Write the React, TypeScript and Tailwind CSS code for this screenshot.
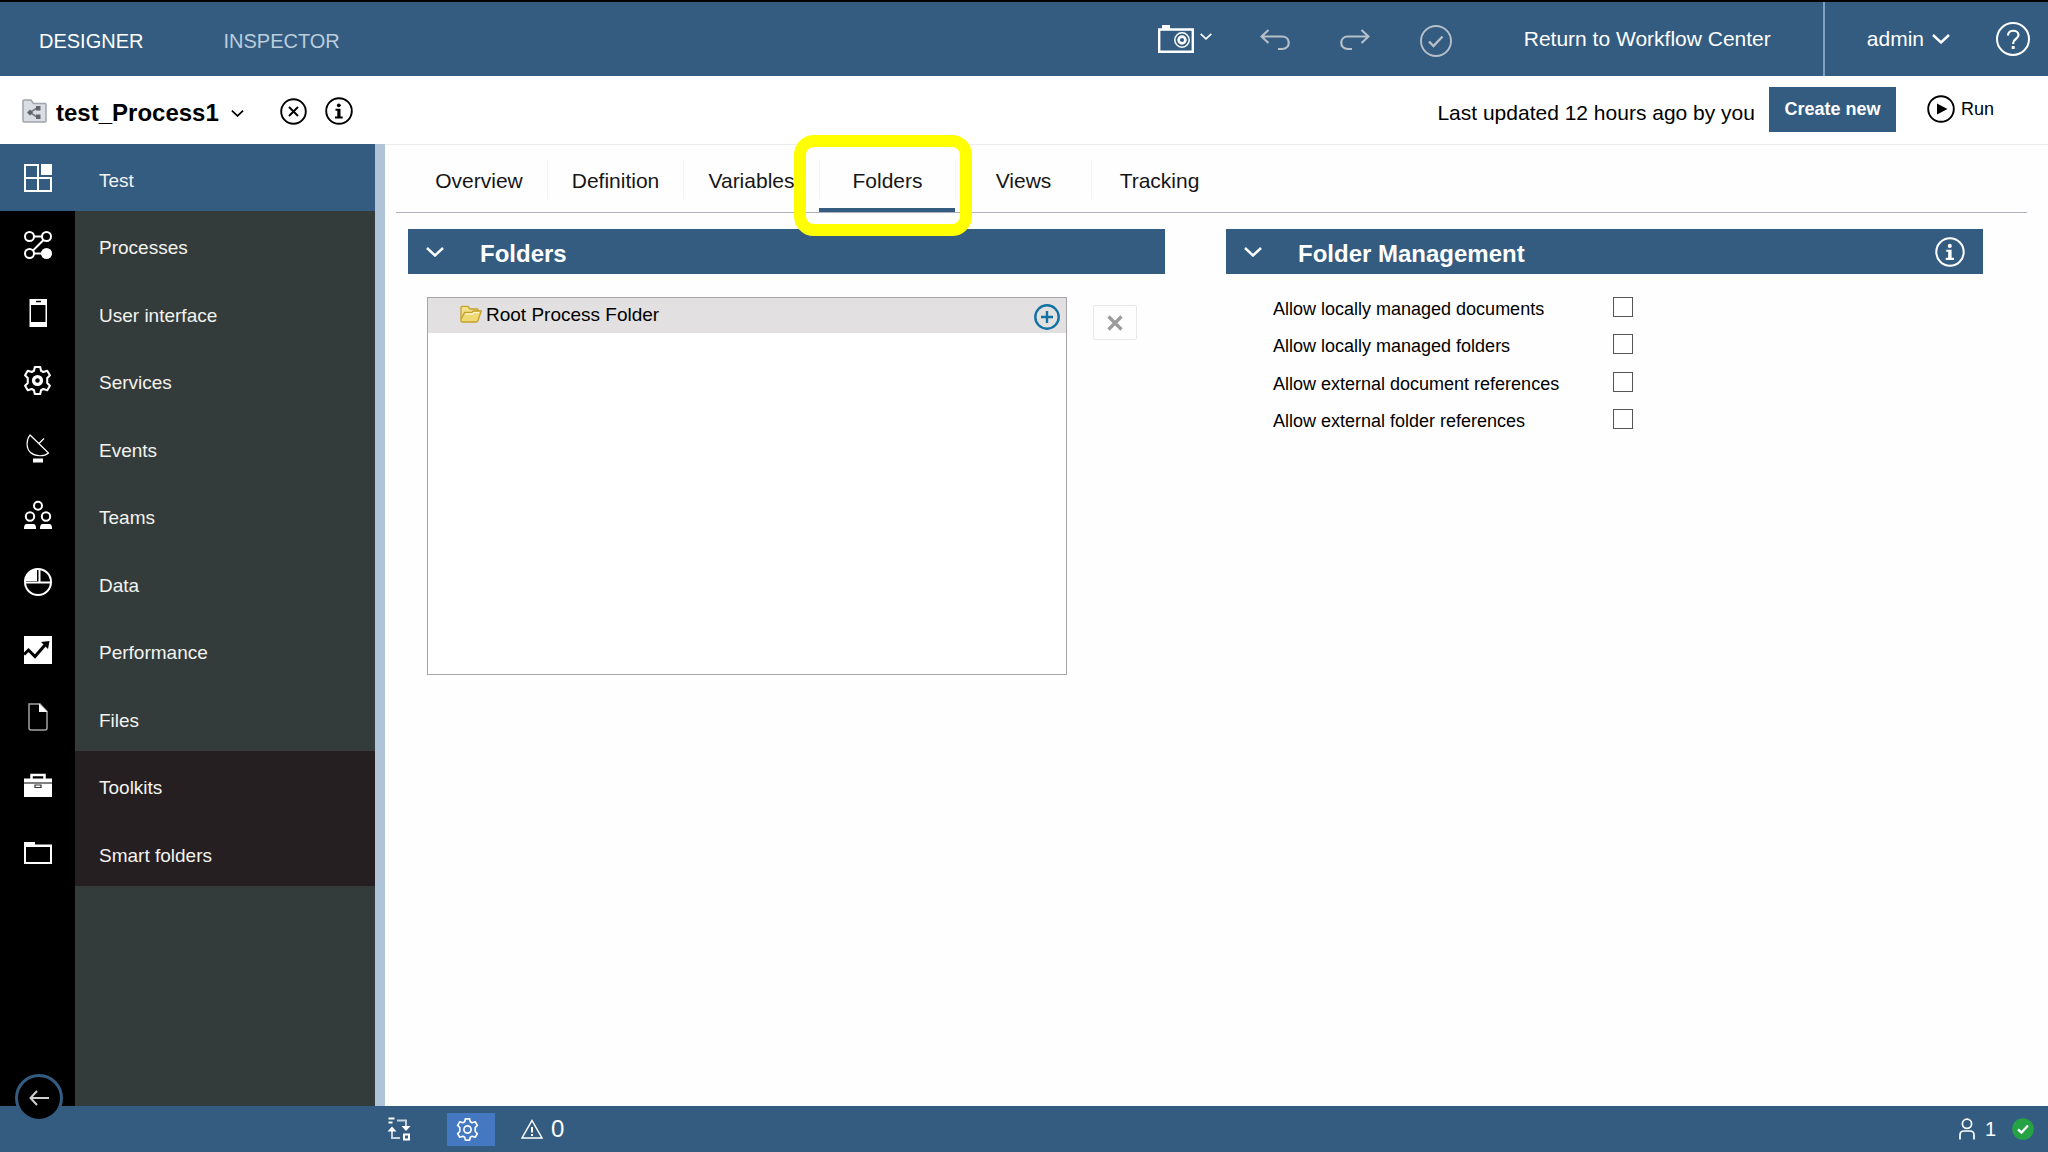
import type { ReactNode } from 'react';

interface IconProps {
  className?: string;
}

function ChevronIcon({ className }: IconProps) {
  return (
    <svg className={className} viewBox="0 0 18 10" fill="none" stroke="currentColor" strokeWidth="2.4">
      <path d="M1 1l8 7.5L17 1" />
    </svg>
  );
}

function InfoIcon({ className }: IconProps) {
  return (
    <svg className={className} viewBox="0 0 28 28" fill="none">
      <circle cx="14" cy="14" r="12.8" stroke="currentColor" strokeWidth="1.9" />
      <circle cx="13.8" cy="8.3" r="1.9" fill="currentColor" />
      <path d="M10.5 11.8h5v7.6h2.2v2H10v-2h2.3v-5.6h-1.8z" fill="currentColor" />
    </svg>
  );
}

function GearIcon({ className, bold = false }: IconProps & { bold?: boolean }) {
  return (
    <svg className={className} viewBox="0 0 28 28" fill="none" stroke="currentColor" strokeWidth="2" strokeLinejoin="round">
      <path d="M11.4 1h5.2l.8 3.6 2.2 1.2 3.8-1.2 2.6 4.4-2.6 2.6v4.8l2.6 2.6-2.6 4.4-3.8-1.2-2.2 1.2-.8 3.6h-5.2l-.8-3.6-2.2-1.2-3.8 1.2L2 19l2.6-2.6v-4.8L2 9l2.6-4.4 3.8 1.2 2.2-1.2z" />
      <circle cx="14" cy="14" r={bold ? 3.8 : 4.4} strokeWidth={bold ? 3.2 : 2} />
    </svg>
  );
}

const menuItems: { label: string; icon: ReactNode; dark?: boolean }[] = [
  {
    label: 'Test',
    icon: (
      <>
        <path d="M1 1h13v13H1zM1 14h13v13H1zM14 14h13v13H14z" strokeWidth="2" />
        <path d="M17 0h11v11H17z" fill="currentColor" stroke="none" />
      </>
    ),
  },
  {
    label: 'Processes',
    icon: (
      <>
        <circle cx="5.5" cy="5.5" r="4.5" strokeWidth="2" />
        <circle cx="22.5" cy="5.5" r="4.5" strokeWidth="2" />
        <circle cx="5.5" cy="22.5" r="4.5" strokeWidth="2" />
        <circle cx="22.5" cy="22.5" r="5.5" fill="currentColor" stroke="none" />
        <path d="M10 5.5h8M19.5 9L9 19.5M10 22.5h8" strokeWidth="2" />
      </>
    ),
  },
  {
    label: 'User interface',
    icon: (
      <>
        <path fillRule="evenodd" d="M5.5 0H23v28H5.5zM7 6v17h14.5V6z" fill="currentColor" stroke="none" />
        <path d="M12 2.5h5" stroke="#000" strokeWidth="1.5" />
      </>
    ),
  },
  { label: 'Services', icon: null },
  {
    label: 'Events',
    icon: (
      <>
        <path d="M6 1C2 6 2 14 6.5 18.5 11 22.5 20 23 24.5 19z" strokeWidth="1.2" />
        <path d="M15 9.5l5-5" strokeWidth="1.2" />
        <path d="M9 24.5h10v4H9z" fill="currentColor" stroke="none" />
      </>
    ),
  },
  {
    label: 'Teams',
    icon: (
      <>
        <circle cx="14" cy="4.7" r="4" strokeWidth="2" />
        <circle cx="6" cy="15.5" r="4.2" strokeWidth="2" />
        <circle cx="22" cy="15.5" r="4.2" strokeWidth="2" />
        <path d="M0 28c0-4 1-5 3-5h6c2 0 3 1 3 5zM16 28c0-4 1-5 3-5h6c2 0 3 1 3 5z" fill="currentColor" stroke="none" />
      </>
    ),
  },
  {
    label: 'Data',
    icon: (
      <>
        <circle cx="14" cy="14" r="13" strokeWidth="2" />
        <path d="M1 14.5h26M15.5 1v13" strokeWidth="2" />
        <path d="M13 .5V13H.5C1 6 6 1 13 .5z" fill="currentColor" stroke="none" />
      </>
    ),
  },
  {
    label: 'Performance',
    icon: (
      <>
        <path d="M0 0h28v28H0z" fill="currentColor" stroke="none" />
        <path d="M0 18.5L4.500 14l6.500 6.500L21 9" stroke="#000" strokeWidth="3" />
        <path d="M17 6l8.500-1L24 13z" fill="#000" stroke="none" />
      </>
    ),
  },
  {
    label: 'Files',
    icon: (
      <>
        <path d="M5 1h11l7 7.500V25c0 1.500-.5 2-2 2H7c-1.500 0-2-.5-2-2z" stroke="#a3a3a3" strokeWidth="1.5" />
        <path d="M15 .5L23.500 9H15z" fill="currentColor" stroke="none" />
      </>
    ),
  },
  {
    label: 'Toolkits',
    dark: true,
    icon: (
      <>
        <path d="M7.500 8V4h13v4" strokeWidth="2.5" />
        <path d="M0 7.500h28v4H0zM0 12.500h28V26H0z" fill="currentColor" stroke="none" />
        <path d="M11 14h6v2.500h-6z" stroke="#333" strokeWidth="1.2" />
      </>
    ),
  },
  {
    label: 'Smart folders',
    dark: true,
    icon: (
      <>
        <path d="M1 7.500h26V25H1z" strokeWidth="2" />
        <path d="M0 4h11v3h17v2H0z" fill="currentColor" stroke="none" />
      </>
    ),
  },
];

const tabs = ['Overview', 'Definition', 'Variables', 'Folders', 'Views', 'Tracking'];

const folderOptions = [
  { id: 'local-documents', label: 'Allow locally managed documents' },
  { id: 'local-folders', label: 'Allow locally managed folders' },
  { id: 'external-documents', label: 'Allow external document references' },
  { id: 'external-folders', label: 'Allow external folder references' },
];

function TopBar() {
  return (
    <header className="flex h-[76px] items-center border-t-2 border-t-black bg-[#335c80] text-[21px] text-white">
      <nav className="flex flex-1 gap-20 pt-1 pl-[39px] text-xl">
        <a href="#designer">DESIGNER</a>
        <a href="#inspector" className="text-[#bccddd]">INSPECTOR</a>
      </nav>
      <div className="flex items-center">
        <button aria-label="Snapshots" className="flex items-center gap-1.5">
          <svg className="h-7 w-9" viewBox="0 0 36 28" fill="none" stroke="currentColor">
            <path d="M1.200 4.500h33.600v22.300H1.200z" strokeWidth="2.4" />
            <path d="M4 0h8v4H4z" fill="currentColor" stroke="none" />
            <circle cx="24" cy="15" r="7.2" strokeWidth="1.5" />
            <circle cx="24" cy="15" r="3.4" strokeWidth="2.6" />
          </svg>
          <ChevronIcon className="mb-1.5 h-[7px] w-3" />
        </button>
        <button aria-label="Undo" className="mt-1 ml-12 text-[#b7bfc8]">
          <svg className="h-6 w-[30px]" viewBox="0 0 30 24" fill="none" stroke="currentColor" strokeWidth="2.2">
            <path d="M8.500 1L1.500 7.500l7 6.500M1.500 7.500H22c9 0 9 12.500 0 12.500h-4" />
          </svg>
        </button>
        <button aria-label="Redo" className="mt-1 ml-[50px] text-[#b7bfc8]">
          <svg className="h-6 w-[30px]" viewBox="0 0 30 24" fill="none" stroke="currentColor" strokeWidth="2.2">
            <path d="M21.500 1l7 6.500-7 6.500M28.500 7.500H8c-9 0-9 12.500 0 12.500h4" />
          </svg>
        </button>
        <button aria-label="Validate" className="mt-1 ml-[50px] text-[#b7bfc8]">
          <svg className="size-8" viewBox="0 0 32 32" fill="none" stroke="currentColor" strokeWidth="1.9">
            <circle cx="16" cy="16" r="15" />
            <path d="M9 16.500l4.500 4.500 9-9.500" strokeWidth="2.4" />
          </svg>
        </button>
      </div>
      <a href="#center" className="ml-[72px]">Return to Workflow Center</a>
      <div className="ml-[52px] flex h-full items-center border-l-2 border-[#7f9fbe] pl-[42px]">
        <button className="flex items-center gap-2">
          admin
          <ChevronIcon className="h-2.5 w-[18px]" />
        </button>
        <button aria-label="Help" className="mr-[18px] ml-[46px]">
          <svg className="size-[34px]" viewBox="0 0 34 34" fill="none" stroke="currentColor" strokeWidth="2">
            <circle cx="17" cy="17" r="16" />
            <path d="M12 13.500c0-6.500 10.500-6 10.500-.5 0 4-5.300 4-5.300 8v1" strokeWidth="2.2" />
            <path d="M15.700 24h3v3h-3z" fill="currentColor" stroke="none" />
          </svg>
        </button>
      </div>
    </header>
  );
}

function ProjectBar() {
  return (
    <div className="flex h-[68px] items-center bg-white pt-0.5 text-[21px] text-black">
      <svg className="ml-[22px] h-6 w-[25px]" viewBox="0 0 25 24" fill="none">
        <path d="M1 5V2c0-.7.3-1 1-1h7l2.500 3.500H23c.7 0 1 .3 1 1V22c0 .7-.3 1-1 1H2c-.7 0-1-.3-1-1z" fill="#dadde3" stroke="#a0a3a9" strokeWidth="1.5" />
        <path d="M8 13.500l7-4.500M8 13.500l7 4.500" stroke="#777b84" strokeWidth="1.5" />
        <path d="M5 13.500l3-3 3 3-3 3zM14 7h4.500v4.500H14zM14 15.500h4.500V20H14z" fill="#60646d" />
      </svg>
      <button className="ml-[9px] flex items-center gap-3 pt-1 text-2xl font-bold">
        test_Process1
        <ChevronIcon className="h-[7px] w-[13px]" />
      </button>
      <button aria-label="Close" className="ml-9">
        <svg className="size-[27px]" viewBox="0 0 27 27" fill="none" stroke="currentColor" strokeWidth="1.9">
          <circle cx="13.5" cy="13.5" r="12.3" />
          <path d="M9 9l9 9M18 9l-9 9" />
        </svg>
      </button>
      <button aria-label="Details" className="ml-[18px]">
        <InfoIcon className="size-7" />
      </button>
      <p className="ml-auto pt-1">Last updated 12 hours ago by you</p>
      <button className="mb-1 ml-[14px] h-[45px] w-[127px] bg-[#335c80] text-lg font-bold text-white">Create new</button>
      <button className="mr-[54px] mb-1 ml-[31px] flex items-center gap-1.5 text-lg">
        <svg className="size-7" viewBox="0 0 28 28" fill="none" stroke="currentColor" strokeWidth="1.9">
          <circle cx="14" cy="14" r="12.8" />
          <path d="M10 8.500L20.500 14 10 19.500z" fill="currentColor" stroke="none" />
        </svg>
        Run
      </button>
    </div>
  );
}

function Sidebar() {
  return (
    <aside className="relative flex w-[385px] shrink-0 flex-col border-r-10 border-[#b0c4d9] bg-[linear-gradient(to_right,#000_75px,#333c3b_75px)]">
      <nav className="grid h-[742px] grid-rows-[repeat(11,1fr)] text-[19px] text-[#f3f3f0]">
        {menuItems.map((item, i) => (
          <a key={item.label} href="#" className={i === 0 ? 'flex bg-[#335c80]' : 'flex'}>
            <span className="flex w-[75px] items-center justify-center text-white">
              {item.icon ? (
                <svg className="size-7 overflow-visible" viewBox="0 0 28 28" fill="none" stroke="currentColor">
                  {item.icon}
                </svg>
              ) : (
                <GearIcon className="size-[29px]" bold />
              )}
            </span>
            <span className={item.dark ? 'flex flex-1 items-center bg-[#251f22] pt-[7px] pl-6' : 'flex flex-1 items-center pt-[7px] pl-6'}>
              {item.label}
            </span>
          </a>
        ))}
      </nav>
      {/* Collapse button hangs over the status bar */}
      <button
        aria-label="Collapse menu"
        className="absolute -bottom-4 left-[15px] flex size-12 items-center justify-center rounded-full border-3 border-[#335c80] bg-black text-[#cfcfcf]"
      >
        <svg className="h-4 w-5" viewBox="0 0 20 16" fill="none" stroke="currentColor" strokeWidth="2">
          <path d="M8 1L1.500 8 8 15M1.500 8H20" />
        </svg>
      </button>
    </aside>
  );
}

function SectionHeader({ title, info = false }: { title: string; info?: boolean }) {
  return (
    <div className="flex h-[45px] items-center bg-[#335c80] px-[18px] text-white">
      <button aria-label={`Collapse ${title}`}>
        <ChevronIcon className="h-2.5 w-[18px]" />
      </button>
      <h2 className="ml-9 pt-1 text-2xl font-bold">{title}</h2>
      {info && (
        <button aria-label="About folder management" className="ml-auto">
          <InfoIcon className="size-[30px]" />
        </button>
      )}
    </div>
  );
}

function FolderTree() {
  return (
    <section>
      <SectionHeader title="Folders" />
      <div className="mt-[23px] flex items-start pr-7 pl-[19px]">
        <div className="h-[378px] flex-1 border border-[#a6a6aa] bg-white">
          <div className="flex h-[35px] items-center bg-[#e2e0e1] pr-1.5 pl-8 text-[19px] text-black">
            <svg className="mr-1 mb-1 h-[18px] w-[22px]" viewBox="0 0 22 18" fill="none" stroke="#c2a02c" strokeWidth="1.3">
              <path d="M1 14V3c0-1 .5-1.700 1.500-1.700H8L10 4h7c.8 0 1.200.5 1.200 1.200V8" fill="#f3e08a" />
              <path d="M1 14.500L4.500 7.500h7.300L13.300 6H21.300L18 15.500c-.4 1-1 1.500-2 1.500H2.500C1.200 17 .7 16 1 14.500z" fill="#f0d873" />
              <path d="M5.500 9h7l1.500-1.400h5" stroke="#fdf6cf" />
            </svg>
            Root Process Folder
            <button aria-label="Add folder" className="ml-auto pt-0.5 text-[#1272a3]">
              <svg className="size-[26px]" viewBox="0 0 26 26" fill="none" stroke="currentColor" strokeWidth="2.4">
                <circle cx="13" cy="13" r="11.7" />
                <path d="M13 7v12M7 13h12" />
              </svg>
            </button>
          </div>
        </div>
        <button
          aria-label="Remove folder"
          className="mt-2 ml-[26px] flex h-[35px] w-11 items-center justify-center rounded-xs border border-[#e8e8ea] text-[#9b9b9b]"
        >
          <svg className="size-4" viewBox="0 0 16 16" fill="none" stroke="currentColor" strokeWidth="3.2">
            <path d="M1.500 1.500l13 13M14.500 1.500l-13 13" />
          </svg>
        </button>
      </div>
    </section>
  );
}

function FolderManagement() {
  return (
    <section>
      <SectionHeader title="Folder Management" info />
      <div className="mt-3.5 grid h-[150px] grid-rows-4 pl-[47px] text-lg text-black">
        {folderOptions.map((option) => (
          <div key={option.id} className="flex items-center">
            <label htmlFor={option.id} className="w-[340px] pt-1">{option.label}</label>
            <input id={option.id} type="checkbox" className="size-5 appearance-none border border-[#555] bg-white" />
          </div>
        ))}
      </div>
    </section>
  );
}

function StatusBar() {
  return (
    <footer className="flex h-[46px] items-center bg-[#335c80] pl-[387px] text-white">
      <button aria-label="Refresh">
        <svg className="size-6" viewBox="0 0 24 24" fill="none" stroke="currentColor" strokeWidth="2">
          <path d="M1.500 1.500h6M1.500 5.500h4" />
          <path d="M10 3.500h9V11M13 21H5v-9" stroke="#c5d3e0" />
          <path d="M14.500 9h9L19 14zM.5 14.500h9L5 9.500z" fill="currentColor" stroke="none" />
          <path d="M17 17.500h5v5h-5z" />
        </svg>
      </button>
      <button aria-label="Settings" className="ml-9 flex h-[33px] w-12 items-center bg-[#4478c0] pl-[9px]">
        <GearIcon className="size-[23px]" />
      </button>
      <button className="ml-[26px] flex items-center gap-2 text-2xl">
        <svg className="h-5 w-[22px]" viewBox="0 0 22 20" fill="none" stroke="currentColor" strokeWidth="1.5">
          <path d="M11 1.500L21 19H1z" />
          <path d="M11 8v5.500M11 15v2" strokeWidth="2" />
        </svg>
        0
      </button>
      <div className="mr-[14px] ml-auto flex items-center text-xl">
        <svg className="mr-2.5 h-[22px] w-4" viewBox="0 0 16 22" fill="none" stroke="currentColor" strokeWidth="1.7">
          <circle cx="8" cy="5.8" r="4.6" />
          <path d="M1 21.500V17c0-2.500 1.500-4 4-4h6c2.500 0 4 1.500 4 4v4.500" />
        </svg>
        1
        <svg className="ml-4 size-[22px]" viewBox="0 0 22 22" fill="none">
          <circle cx="11" cy="11" r="10.8" fill="#25a244" />
          <path d="M6 11.500l3.500 3 6.500-7" stroke="#fff" strokeWidth="2.4" />
        </svg>
      </div>
    </footer>
  );
}

export default function App() {
  return (
    <div className="flex min-h-screen flex-col bg-white font-['Liberation_Sans',Arial,sans-serif]">
      <TopBar />
      <ProjectBar />
      <div className="flex flex-1">
        <Sidebar />
        <main className="min-w-0 flex-1 border-t border-[#ececef] bg-[#fefefe]">
          <nav className="mr-[21px] ml-[11px] flex h-[68px] border-b border-[#b0b0b8] pl-[15px] text-[21px] text-[#161616]">
            {tabs.map((tab, i) => (
              <a key={tab} href="#" className="relative flex w-[136px] items-center">
                <span
                  className={
                    i === 0
                      ? 'flex h-10 flex-1 items-center justify-center pt-1'
                      : 'flex h-10 flex-1 items-center justify-center border-l border-[#f5f3f7] pt-1'
                  }
                >
                  {tab}
                </span>
                {tab === 'Folders' && (
                  <>
                    <span className="absolute bottom-0 left-0 h-1 w-full bg-[#335c80]" />
                    <span className="absolute -top-2.5 -right-[17px] -left-[25px] z-10 h-[101px] rounded-[20px] border-12 border-[#ffff00]" />
                  </>
                )}
              </a>
            ))}
          </nav>
          <div className="grid grid-cols-2 gap-[61px] pt-4 pr-[65px] pl-[23px]">
            <FolderTree />
            <FolderManagement />
          </div>
        </main>
      </div>
      <StatusBar />
    </div>
  );
}
